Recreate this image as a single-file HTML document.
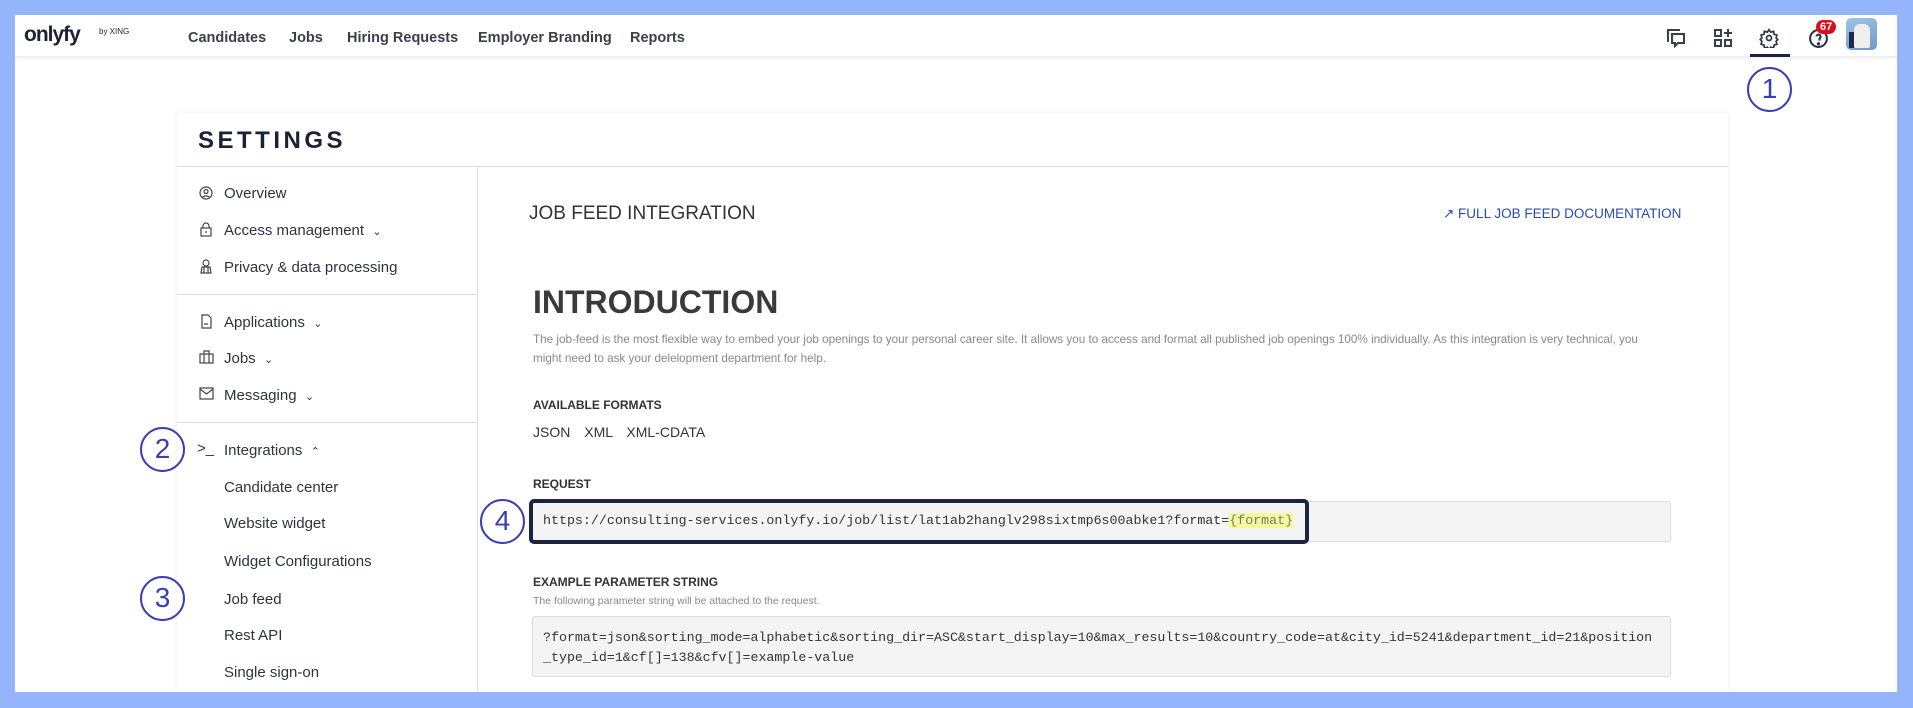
<!DOCTYPE html>
<html><head><meta charset="utf-8"><style>
*{box-sizing:border-box;margin:0;padding:0}
body{width:1913px;height:708px;background:#94b4fc;font-family:"Liberation Sans",Arial,sans-serif;position:relative;overflow:hidden}
.frame{position:absolute;left:15px;top:15px;width:1882px;height:677px;background:#fff;overflow:hidden}
.nav{position:absolute;left:0;top:0;width:100%;height:42px;background:#fff;box-shadow:0 1px 3px rgba(0,0,0,.08);border-bottom:1px solid #eceef2}
.abs{position:absolute;white-space:nowrap}
.navl{font-size:14.5px;font-weight:bold;color:#3b3f4a;top:15px}
.card{position:absolute;left:162px;top:98px;width:1551px;height:600px;background:#fff;box-shadow:0 0 4px rgba(0,0,0,.08)}
.side{font-size:15px;color:#2d3340}
.lbl{font-size:12px;font-weight:bold;color:#333}
.circle{position:absolute;width:45px;height:45px;border:2px solid #3a3db5;border-radius:50%;color:#3a3db5;font-size:28px;text-align:center;line-height:40px;background:transparent}
.mono{font-family:"Liberation Mono",monospace;font-size:13.3px;color:#333}
</style></head><body>
<div class="frame">
 <div class="nav">
  <div class="abs" style="left:9px;top:8px;font-size:21px;font-weight:bold;color:#1b2233;letter-spacing:-1px">onlyfy</div>
  <div class="abs" style="left:84px;top:12px;font-size:8px;color:#1b2233">by XING</div>
  <div class="abs navl" style="left:173px">Candidates</div>
  <div class="abs navl" style="left:274px">Jobs</div>
  <div class="abs navl" style="left:332px">Hiring Requests</div>
  <div class="abs navl" style="left:463px">Employer Branding</div>
  <div class="abs navl" style="left:615px">Reports</div>
  <svg class="abs" style="left:1651px;top:13px" width="20" height="20" viewBox="0 0 20 20" fill="none" stroke="#3b3f4a" stroke-width="2"><path d="M2 14V2h12"/><path d="M6 6h12v9h-6l-3 3v-3H6z"/></svg>
  <svg class="abs" style="left:1698px;top:13px" width="20" height="20" viewBox="0 0 20 20" fill="none" stroke="#3b3f4a" stroke-width="2"><rect x="2" y="2" width="6" height="6"/><rect x="2" y="12" width="6" height="6"/><rect x="12" y="12" width="6" height="6"/><path d="M15 1v8M11 5h8"/></svg>
  <svg class="abs" style="left:1744px;top:13px" width="20" height="20" viewBox="0 0 24 24" fill="none" stroke="#2d3340" stroke-width="2"><circle cx="12" cy="12" r="3"/><path d="M12 2l2 3 3.5-1 .5 3.5 3.5 1-1 3.5 2 2-2 2 1 3.5-3.5 1-.5 3.5-3.5-1-2 3-2-3-3.5 1-.5-3.5-3.5-1 1-3.5-2-2 2-2-1-3.5 3.5-1 .5-3.5 3.5 1z"/></svg>
  <div class="abs" style="left:1735px;top:39px;width:40px;height:3px;background:#1b2540"></div>
  <svg class="abs" style="left:1793px;top:13px" width="21" height="21" viewBox="0 0 20 20" fill="none" stroke="#2d3340" stroke-width="2"><circle cx="10" cy="10" r="8"/><path d="M8 8a2 2 0 1 1 3 2v2"/><circle cx="10" cy="15" r=".6" fill="#2d3340"/></svg>
  <div class="abs" style="left:1801px;top:5px;background:#d9101c;color:#fff;font-size:11px;font-weight:bold;border-radius:8px;padding:1px 4px">67</div>
  <div class="abs" style="left:1831px;top:3px;width:31px;height:32px;border-radius:5px;background:linear-gradient(160deg,#9fc3e6,#6e9bc8)"><div style="position:absolute;left:8px;top:6px;width:16px;height:24px;background:#eee;border-radius:6px 6px 2px 2px"></div><div style="position:absolute;left:3px;top:14px;width:5px;height:16px;background:#1d2b4a"></div></div>
 </div>
 <div class="circle" style="left:1732px;top:52px">1</div>

 <div class="card">
  <div class="abs" style="left:21px;top:14px;font-size:24px;font-weight:bold;letter-spacing:3.5px;color:#1b2233">SETTINGS</div>
  <div class="abs" style="left:0;top:53px;width:100%;height:1px;background:#dcdde3"></div>
  <div class="abs" style="left:300px;top:53px;width:1px;height:560px;background:#dcdde3"></div>
  <div class="abs" style="left:0;top:181px;width:300px;height:1px;background:#dcdde3"></div>
  <div class="abs" style="left:0;top:309px;width:300px;height:1px;background:#dcdde3"></div>
  <!-- sidebar -->
  <svg class="abs" style="left:22px;top:73px" width="14" height="14" viewBox="0 0 14 14" fill="none" stroke="#444" stroke-width="1.2"><circle cx="7" cy="7" r="6"/><circle cx="7" cy="5.5" r="2"/><path d="M3.5 11.5c1-2 6-2 7 0"/></svg>
  <div class="abs side" style="left:47px;top:72px">Overview</div>
  <svg class="abs" style="left:22px;top:109px" width="14" height="15" viewBox="0 0 14 15" fill="none" stroke="#444" stroke-width="1.2"><rect x="2" y="6" width="10" height="8"/><path d="M4 6V4a3 3 0 0 1 6 0v2M7 9v2"/></svg>
  <div class="abs side" style="left:47px;top:109px">Access management&nbsp;&nbsp;<span style="font-size:11px">⌄</span></div>
  <svg class="abs" style="left:22px;top:146px" width="14" height="15" viewBox="0 0 14 15" fill="none" stroke="#444" stroke-width="1.2"><circle cx="7" cy="4" r="3"/><path d="M2 14l1-6h8l1 6zM5 8v6M9 8v6"/></svg>
  <div class="abs side" style="left:47px;top:146px">Privacy &amp; data processing</div>
  <svg class="abs" style="left:22px;top:201px" width="14" height="15" viewBox="0 0 14 15" fill="none" stroke="#444" stroke-width="1.2"><path d="M3 1h6l3 3v10H3zM5 10h4"/></svg>
  <div class="abs side" style="left:47px;top:201px">Applications&nbsp;&nbsp;<span style="font-size:11px">⌄</span></div>
  <svg class="abs" style="left:22px;top:237px" width="15" height="14" viewBox="0 0 15 14" fill="none" stroke="#444" stroke-width="1.2"><rect x="1" y="4" width="13" height="9"/><path d="M5 4V1h5v3M5 4v9M10 4v9"/></svg>
  <div class="abs side" style="left:47px;top:237px">Jobs&nbsp;&nbsp;<span style="font-size:11px">⌄</span></div>
  <svg class="abs" style="left:22px;top:274px" width="15" height="13" viewBox="0 0 15 13" fill="none" stroke="#444" stroke-width="1.2"><rect x="1" y="1" width="13" height="11"/><path d="M1 2l6.5 5L14 2"/></svg>
  <div class="abs side" style="left:47px;top:274px">Messaging&nbsp;&nbsp;<span style="font-size:11px">⌄</span></div>
  <div class="abs side" style="left:20px;top:327px;font-size:15px">&gt;_</div>
  <div class="abs side" style="left:47px;top:329px">Integrations&nbsp;&nbsp;<span style="font-size:11px">⌃</span></div>
  <div class="abs side" style="left:47px;top:366px">Candidate center</div>
  <div class="abs side" style="left:47px;top:402px">Website widget</div>
  <div class="abs side" style="left:47px;top:440px">Widget Configurations</div>
  <div class="abs side" style="left:47px;top:478px">Job feed</div>
  <div class="abs side" style="left:47px;top:514px">Rest API</div>
  <div class="abs side" style="left:47px;top:551px">Single sign-on</div>
  <!-- content -->
  <div class="abs" style="left:352px;top:90px;font-size:19px;color:#333">JOB FEED INTEGRATION</div>
  <div class="abs" style="left:1266px;top:93px;font-size:13.5px;color:#2a49b8">&#x2197;&#xFE0E; FULL JOB FEED DOCUMENTATION</div>
  <div class="abs" style="left:356px;top:171px;font-size:32px;font-weight:bold;color:#3a3a3a">INTRODUCTION</div>
  <div class="abs" style="left:356px;top:217px;font-size:11.7px;line-height:19px;color:#888">The job-feed is the most flexible way to embed your job openings to your personal career site. It allows you to access and format all published job openings 100% individually. As this integration is very technical, you<br>might need to ask your delelopment department for help.</div>
  <div class="abs lbl" style="left:356px;top:285px">AVAILABLE FORMATS</div>
  <div class="abs" style="left:356px;top:311px;font-size:14px;color:#333;word-spacing:10px">JSON XML XML-CDATA</div>
  <div class="abs lbl" style="left:356px;top:364px">REQUEST</div>
  <div class="abs" style="left:355px;top:388px;width:1139px;height:41px;background:#f4f4f4;border:1px solid #ddd;border-radius:3px"></div>
  <div class="abs" style="left:352px;top:386px;width:780px;height:45px;border:4px solid #1b2540;border-radius:5px"></div>
  <div class="abs mono" style="left:366px;top:400px">https://consulting-services.onlyfy.io/job/list/lat1ab2hanglv298sixtmp6s00abke1?format=<span style="background:#f4fa9c;color:#777">{format}</span></div>
  <div class="abs lbl" style="left:356px;top:462px">EXAMPLE PARAMETER STRING</div>
  <div class="abs" style="left:356px;top:482px;font-size:10.5px;color:#888">The following parameter string will be attached to the request.</div>
  <div class="abs" style="left:355px;top:503px;width:1139px;height:61px;background:#f4f4f4;border:1px solid #ddd;border-radius:3px"></div>
  <div class="abs mono" style="left:366px;top:515px;line-height:20px">?format=json&amp;sorting_mode=alphabetic&amp;sorting_dir=ASC&amp;start_display=10&amp;max_results=10&amp;country_code=at&amp;city_id=5241&amp;department_id=21&amp;position<br>_type_id=1&amp;cf[]=138&amp;cfv[]=example-value</div>
 </div>
 <div class="circle" style="left:125px;top:412px">2</div>
 <div class="circle" style="left:125px;top:561px">3</div>
 <div class="circle" style="left:465px;top:484px">4</div>
</div>
</body></html>
